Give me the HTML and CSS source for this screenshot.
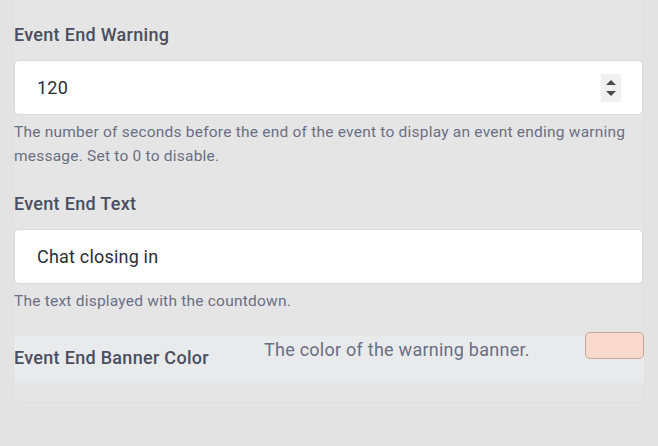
FILE: index.html
```html
<!DOCTYPE html>
<html>
<head>
<meta charset="utf-8">
<link rel="stylesheet" href="styles.css">
</head>
<body>
<div class="panel">
  <div class="field">
    <div class="label">Event End Warning</div>
    <div class="input">
      <span class="value">120</span>
      <span class="spin">
        <svg width="20" height="28" viewBox="0 0 20 28"><path d="M10 6 L15 11 L5 11 Z" fill="#4a4a4a"/><path d="M5 17 L15 17 L10 22 Z" fill="#4a4a4a"/></svg>
      </span>
    </div>
    <div class="help">The number of seconds before the end of the event to display an event ending warning message. Set to 0 to disable.</div>
  </div>
  <div class="field">
    <div class="label">Event End Text</div>
    <div class="input">
      <span class="value">Chat closing in</span>
    </div>
    <div class="help">The text displayed with the countdown.</div>
  </div>
  <div class="color-row">
    <div class="row-label">Event End Banner Color</div>
    <div class="row-desc">The color of the warning banner.</div>
    <div class="swatch"></div>
  </div>
</div>
</body>
</html>
```
FILE: styles.css
```css
html, body {
  margin: 0;
  padding: 0;
  background: #e3e3e3;
  font-family: Roboto, "Liberation Sans", sans-serif;
}
.panel {
  margin: -10px 0 0 13px;
  width: 629px;
  padding: 33px 0 19px 0;
  background: #e5e5e5;
  border: 1px solid #e0e0e0;
  border-top: none;
  border-radius: 0 0 5px 5px;
}
.field {
  display: flex;
  flex-direction: column;
}
.field + .field {
  margin-top: 24px;
}
.label {
  font-size: 18px;
  font-weight: 500;
  letter-spacing: 0.3px;
  line-height: 24px;
  color: #4b4e60;
}
.input {
  margin-top: 13px;
  height: 53px;
  background: #ffffff;
  border: 1px solid #dadada;
  border-radius: 5px;
  display: flex;
  align-items: center;
  padding: 0 21px 0 22px;
}
.value {
  flex: 1;
  font-size: 18px;
  letter-spacing: 0.2px;
  color: #2b2d3a;
}
.spin {
  width: 20px;
  height: 28px;
  background: #f0f0f0;
  display: flex;
}
.help {
  margin-top: 5px;
  font-size: 15.5px;
  letter-spacing: 0.22px;
  line-height: 24px;
  color: #6b6f84;
}
.color-row {
  margin-top: 23px;
  height: 47px;
  background: #e9eaec;
  display: flex;
  align-items: flex-start;
  margin-right: -1px;
}
.row-label {
  width: 250px;
  padding-top: 10px;
  font-size: 18px;
  font-weight: 500;
  letter-spacing: 0.3px;
  line-height: 24px;
  color: #4b4e60;
}
.row-desc {
  flex: 1;
  padding-top: 2px;
  font-size: 18px;
  letter-spacing: 0.25px;
  line-height: 24px;
  color: #6b6f84;
}
.swatch {
  margin-top: -4px;
  width: 57px;
  height: 25px;
  background: #f8d9cc;
  border: 1px solid #c7a59c;
  border-radius: 5px;
}
```
